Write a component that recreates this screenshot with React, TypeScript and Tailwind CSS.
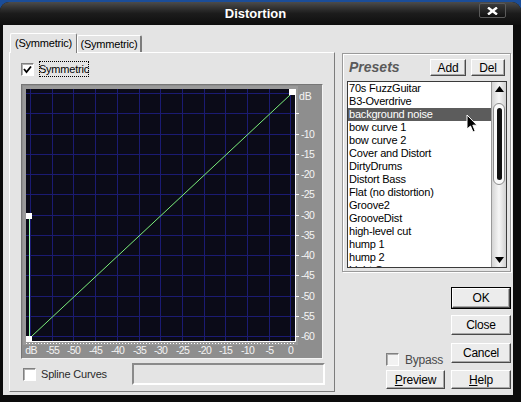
import type { ReactNode } from "react";

const PRESETS = [
  "70s FuzzGuitar",
  "B3-Overdrive",
  "background noise",
  "bow curve 1",
  "bow curve 2",
  "Cover and Distort",
  "DirtyDrums",
  "Distort Bass",
  "Flat (no distortion)",
  "Groove2",
  "GrooveDist",
  "high-level cut",
  "hump 1",
  "hump 2",
  "Light Grunge",
];

const SELECTED = 2;

// grid positions inside the plot svg
const XS = Array.from({ length: 13 }, (_, i) => Math.round(8 + i * 21.7) + 0.5);
const YS = Array.from({ length: 13 }, (_, j) => Math.round(8 + j * 20.25) + 0.5);
const X_LABELS = ["dB", "-55", "-50", "-45", "-40", "-35", "-30", "-25", "-20", "-15", "-10", "-5", "0"];
const Y_LABELS = ["dB", "", "-10", "-15", "-20", "-25", "-30", "-35", "-40", "-45", "-50", "-55", "-60"];

function CheckBox({ checked, disabled }: { checked?: boolean; disabled?: boolean }) {
  return (
    <div
      className={`w-[13px] h-[13px] shrink-0 border border-t-[#808080] border-l-[#808080] border-r-white border-b-white shadow-[inset_1px_1px_0_#b0b0b0] flex items-center justify-center ${
        disabled ? "bg-[#f2f2f2]" : "bg-white"
      }`}
    >
      {checked && (
        <svg width="9" height="9" viewBox="0 0 9 9">
          <polyline points="1,4 3.5,7 8,1.5" fill="none" stroke="#000" strokeWidth="1.8" />
        </svg>
      )}
    </div>
  );
}

function Btn({ children, className = "" }: { children: ReactNode; className?: string }) {
  return (
    <div
      className={`flex items-center justify-center bg-[#ececec] border border-t-white border-l-white border-r-[#4a4a4a] border-b-[#4a4a4a] shadow-[inset_-1px_-1px_0_#a8a8a8] text-[12px] text-black ${className}`}
    >
      {children}
    </div>
  );
}

function Graph() {
  return (
    <div className="w-[302px] h-[275px] bg-[#8e8e8e] border border-t-[#767676] border-l-[#767676] border-r-[#f4f4f4] border-b-[#f4f4f4]">
      <svg width="300" height="273" viewBox="0 0 300 273" className="block">
        <rect x="1" y="1" width="275" height="259" fill="#9a9a9a" />
        <rect x="4" y="4" width="269" height="252" fill="#0b0b18" />
        {XS.map((x) => (
          <line key={"v" + x} x1={x} y1="4" x2={x} y2="256" stroke="#1b1b72" strokeWidth="1" />
        ))}
        {YS.map((y) => (
          <line key={"h" + y} x1="4" y1={y} x2="273" y2={y} stroke="#1b1b72" strokeWidth="1" />
        ))}
        <line x1="273.5" y1="4" x2="273.5" y2="257" stroke="#fff" />
        <line x1="4" y1="256.5" x2="274" y2="256.5" stroke="#fff" />
        <line x1="4" y1="258.5" x2="274" y2="258.5" stroke="#fff" strokeDasharray="1 2" />

        <line x1="7.5" y1="134" x2="7.5" y2="252" stroke="#9cffac" />
        <line x1="10" y1="251" x2="268" y2="10" stroke="#7cf07c" />
        <rect x="4" y="128" width="6" height="6" fill="#fff" />
        <rect x="4" y="251" width="6" height="6" fill="#fff" />
        <rect x="267" y="4" width="7" height="6" fill="#fff" />

        <g fill="#f4f4f4" fontFamily="'Liberation Sans', Arial, sans-serif" fontSize="10.5">
          {Y_LABELS.map((t, j) =>
            j === 0 ? (
              <text key={"y" + j} x="277" y="15">
                dB
              </text>
            ) : (
              <g key={"y" + j}>
                <line x1="274" y1={YS[j]} x2="277" y2={YS[j]} stroke="#f4f4f4" />
                <text x="279" y={YS[j] + 3.5} letterSpacing="-0.7">
                  {t}
                </text>
              </g>
            )
          )}
          {X_LABELS.map((t, i) => (
            <text
              key={"x" + i}
              x={i === 0 ? 9 : XS[i]}
              y="269"
              textAnchor="middle"
              letterSpacing="-0.7"
            >
              {t}
            </text>
          ))}
        </g>
      </svg>
    </div>
  );
}

function ScrollBar() {
  return (
    <div className="w-[15px] h-full flex flex-col border-l border-[#9a9a9a] bg-linear-to-r from-[#d4d4d4] via-[#f6f6f6] to-[#d0d0d0]">
      <div className="h-[14px] flex items-center justify-center">
        <svg width="9" height="6" viewBox="0 0 9 6">
          <polygon points="4.5,0 9,6 0,6" fill="#000" />
        </svg>
      </div>
      <div className="h-[7px]" />
      <div className="h-[82px] mx-[1px] rounded-full border border-[#8a8a8a] bg-[#fafafa] flex justify-center py-[4px]">
        <div className="w-[5px] h-full rounded-full bg-[#101010]" />
      </div>
      <div className="flex-1" />
      <div className="h-[14px] flex items-center justify-center">
        <svg width="9" height="6" viewBox="0 0 9 6">
          <polygon points="0,0 9,0 4.5,6" fill="#000" />
        </svg>
      </div>
    </div>
  );
}

export default function App() {
  return (
    <div className="w-[521px] h-[402px] overflow-hidden bg-[#1b4d98] pt-[2px] font-['Liberation_Sans',Arial,sans-serif] text-[11px] tracking-[-0.2px] text-black">
      <div className="h-[400px] flex flex-col bg-[#0c0c0c] rounded-t-[9px]">
        {/* title bar */}
        <div className="relative h-[23px] shrink-0 rounded-t-[9px] bg-linear-to-b from-[#4c4c4c] via-[#1c1c1c] to-[#0e0e0e] flex items-center justify-center pr-[10px]">
          <span className="text-[13px] font-bold text-white tracking-normal">Distortion</span>
          <div className="absolute right-[15px] top-[1px] w-[27px] h-[15px] rounded-[2px] border border-[#5a5a5a] bg-linear-to-b from-[#3a3a3a] to-[#111] flex items-center justify-center">
            <svg width="11" height="8" viewBox="0 0 11 8">
              <path d="M1 0.5 L10 7.5 M10 0.5 L1 7.5" stroke="#fff" strokeWidth="2.4" />
            </svg>
          </div>
        </div>

        {/* body */}
        <div className="flex-1 ml-[3px] mr-[8px] mb-[7px] bg-[#e4e4e4] flex">
          {/* tabs */}
          <div className="ml-[6px] mt-[8px] w-[326px] flex flex-col">
            <div className="h-[19px] pl-[1px] flex items-end">
              <div className="relative z-10 -mb-px w-[67px] h-[20px] bg-[#e4e4e4] border-t border-l border-white border-r border-r-[#7c7c7c] rounded-t-[2px] flex items-center justify-center pb-[1px]">
                (Symmetric)
              </div>
              <div className="w-[65px] h-[17px] border-t border-l border-white border-r-2 border-r-[#7c7c7c] rounded-t-[2px] flex items-center justify-center">
                (Symmetric)
              </div>
            </div>
            <div className="h-[340px] border border-t-white border-l-white border-r-[#7c7c7c] border-b-[#7c7c7c] pl-[11px] pr-[9px] pt-[8px] flex flex-col">
              <div className="h-[16px] flex items-center">
                <CheckBox checked />
                <div className="ml-[5px] h-[16px] w-[50px] border border-dotted border-black flex items-center justify-center">
                  Symmetric
                </div>
              </div>
              <div className="mt-[7px]">
                <Graph />
              </div>
              <div className="mt-[4px] h-[22px] flex items-center">
                <div className="ml-[2px]">
                  <CheckBox />
                </div>
                <span className="ml-[5px] text-[#2a2a2a]">Spline Curves</span>
                <div className="ml-auto w-[193px] h-[22px] bg-[#e4e4e4] border-2 border-t-[#8a8a8a] border-l-[#8a8a8a] border-r-white border-b-white" />
              </div>
            </div>
          </div>

          {/* right column */}
          <div className="ml-[7px] mt-[28px] w-[169px] flex flex-col">
            <div className="h-[219px] border border-[#9a9a9a] shadow-[inset_1px_1px_0_#fff,1px_1px_0_#fff] pl-[4px] pt-[5px]">
              <div className="w-[158px] h-[17px] flex items-center">
                <span className="ml-[2px] text-[14px] font-bold italic text-[#5a5a5a] tracking-normal">
                  Presets
                </span>
                <Btn className="ml-auto w-[36px] h-[17px]">Add</Btn>
                <Btn className="ml-[5px] w-[34px] h-[17px]">Del</Btn>
              </div>
              <div className="relative mt-[5px] w-[160px] h-[187px] bg-white border border-[#3a3a3a] flex overflow-hidden">
                <div className="flex-1 flex flex-col overflow-hidden">
                  {PRESETS.map((p, i) => (
                    <div
                      key={p}
                      className={`h-[13px] shrink-0 leading-[13px] pl-[1px] whitespace-nowrap ${
                        i === SELECTED ? "bg-[#5c5c5c] text-white" : "text-black"
                      }`}
                    >
                      {p}
                    </div>
                  ))}
                </div>
                <ScrollBar />
                <svg className="absolute left-[118px] top-[32px]" width="13" height="20" viewBox="0 0 13 20">
                  <path d="M1 1 L1 15 L4.5 12 L7 18 L9.2 17 L6.8 11.2 L11 11.2 Z" fill="#000" stroke="#fff" strokeWidth="1" />
                </svg>
              </div>
            </div>

            <div className="mt-[15px] flex justify-end items-end gap-[6px]">
              <div className="flex flex-col">
                <div className="h-[13px] flex items-center">
                  <CheckBox disabled />
                  <span className="ml-[6px] text-[12px] text-[#4a4a4a]">Bypass</span>
                </div>
                <Btn className="mt-[4px] w-[59px] h-[19px]">
                  <span className="underline">P</span>review
                </Btn>
              </div>
              <div className="flex flex-col">
                <div className="w-[60px] h-[22px] border border-black">
                  <Btn className="w-full h-full">OK</Btn>
                </div>
                <Btn className="mt-[6px] w-[60px] h-[20px]">Close</Btn>
                <Btn className="mt-[8px] w-[60px] h-[20px]">Cancel</Btn>
                <Btn className="mt-[7px] w-[60px] h-[19px]">
                  <span className="underline">H</span>elp
                </Btn>
              </div>
            </div>
          </div>
        </div>
      </div>
    </div>
  );
}
